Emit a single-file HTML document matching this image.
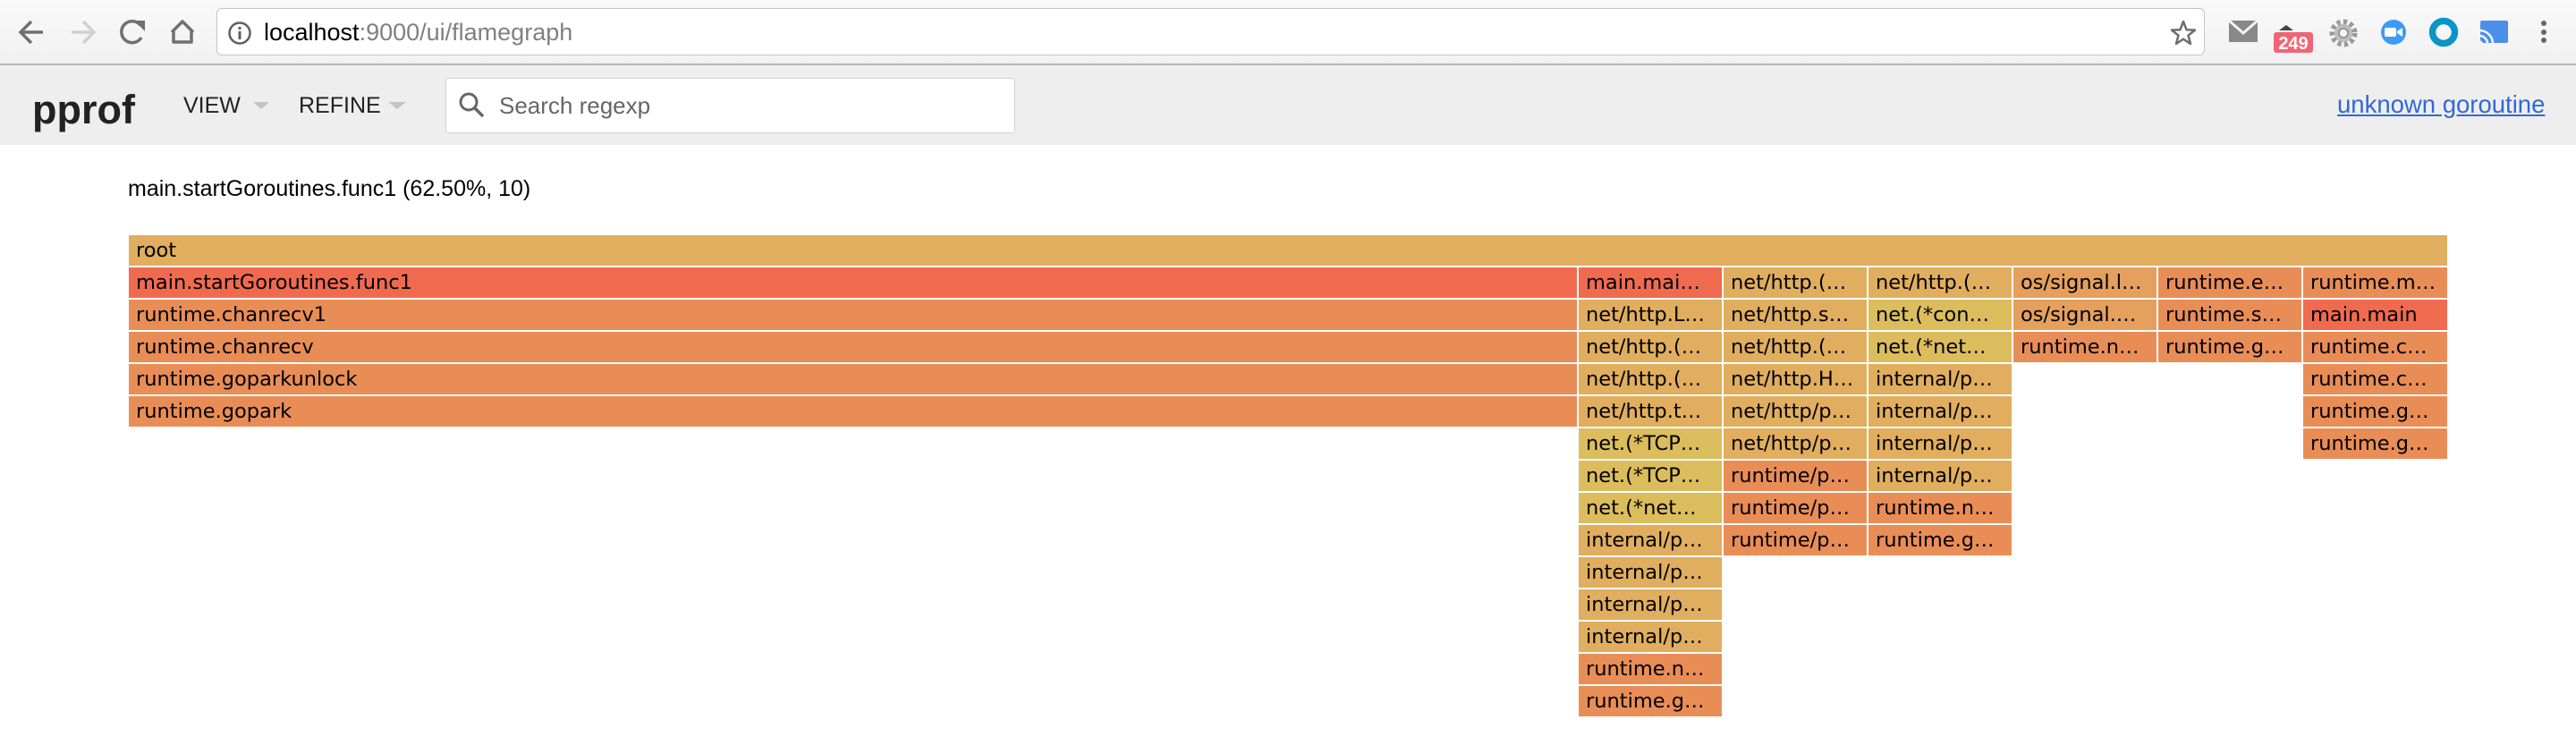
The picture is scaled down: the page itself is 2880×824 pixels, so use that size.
<!DOCTYPE html>
<html><head><meta charset="utf-8">
<style>
*{margin:0;padding:0;box-sizing:border-box}
body{width:2880px;height:824px;background:#fff;position:relative;overflow:hidden;font-family:"Liberation Sans",sans-serif}
.chrome{position:absolute;left:0;top:0;width:2880px;height:73px;background:linear-gradient(#f9f9f9,#f1f1f1);border-bottom:2px solid #b4b4b4}
.url{position:absolute;left:242px;top:9px;width:2223px;height:53px;background:#fff;border:1.5px solid #c4c4c4;border-radius:6px}
.urltext{position:absolute;left:295px;top:19px;font-size:27px;color:#000;line-height:34px}
.urltext span{color:#808080}
.hdr{position:absolute;left:0;top:73px;width:2880px;height:89px;background:#eeeeee}
.ab{position:absolute;white-space:nowrap}
.fb{position:absolute;height:34px;line-height:34px;font-family:"DejaVu Sans",sans-serif;font-size:22.5px;color:#000;padding-left:8px;overflow:hidden;white-space:nowrap}
.R{background:#f06a50}.O{background:#e98d57}.T{background:#e0ae5e}.Y{background:#dcbd5e}.S{background:#e4a05c}
</style></head><body>
<div class="chrome"></div>
<svg class="ab" style="left:0;top:0" width="2880" height="73">
 <g fill="none" stroke="#707070" stroke-width="3.5">
  <path d="M48 36H24M35 24L23 36L35 48"/>
 </g>
 <g fill="none" stroke="#d0d0d0" stroke-width="3.5"><path d="M80 36H104M93 24L105 36L93 48"/></g>
 <path d="M157 28A12 12 0 1 0 158 42" fill="none" stroke="#707070" stroke-width="3.5"/>
 <path d="M150 23L162 23L162 35Z" fill="#707070"/>
 <path d="M204 24L194 34V47H214V34Z M192 36L204 24L216 36" fill="none" stroke="#707070" stroke-width="3.5" stroke-linejoin="round"/>
</svg>
<div class="url"></div>
<svg class="ab" style="left:254px;top:23px" width="28" height="28"><circle cx="14" cy="14" r="11.5" fill="none" stroke="#5f5f5f" stroke-width="2.5"/><rect x="12.5" y="12" width="3" height="9" fill="#5f5f5f"/><rect x="12.5" y="7" width="3" height="3" fill="#5f5f5f"/></svg>
<div class="urltext">localhost<span>:9000/ui/flamegraph</span></div>
<svg class="ab" style="left:2425px;top:21px" width="32" height="32"><path d="M16 3L19.5 12.2L29 12.6L21.5 18.6L24 28L16 22.7L8 28L10.5 18.6L3 12.6L12.5 12.2Z" fill="none" stroke="#6e6e6e" stroke-width="2.5" stroke-linejoin="round"/></svg>
<svg class="ab" style="left:2480px;top:10px" width="400" height="60">
 <rect x="12" y="13" width="32" height="24" fill="#888"/><path d="M12 13L28 27L44 13" fill="none" stroke="#f4f4f4" stroke-width="3"/>
 <path d="M76 18L84 24H68Z" fill="#444"/>
 <rect x="62" y="26" width="44" height="23" rx="3" fill="#f06575"/>
 <text x="84" y="45" text-anchor="middle" font-family="Liberation Sans" font-weight="bold" font-size="20" fill="#fff">249</text>
 <circle cx="140" cy="27" r="12" fill="none" stroke="#9a9a9a" stroke-width="7" stroke-dasharray="4 3"/>
 <circle cx="140" cy="27" r="10" fill="#bdbdbd"/><circle cx="140" cy="27" r="5" fill="#f4f4f4" stroke="#888" stroke-width="1.5"/>
 <circle cx="196" cy="26" r="14" fill="#3d9bf3"/><rect x="186" y="21" width="13" height="10" rx="2" fill="#fff"/><path d="M200 25L206 21V31L200 27Z" fill="#fff"/>
 <circle cx="252" cy="26" r="12.5" fill="none" stroke="#0a94c8" stroke-width="7.5"/>
 <rect x="293" y="13" width="31" height="25" rx="2" fill="#4a90e8"/>
 <path d="M292 24A15 15 0 0 1 307 39M292 30A9 9 0 0 1 301 39" fill="none" stroke="#f4f4f4" stroke-width="2.5"/><circle cx="293" cy="38" r="2.5" fill="#f4f4f4"/>
 <circle cx="364" cy="16" r="3" fill="#666"/><circle cx="364" cy="26" r="3" fill="#666"/><circle cx="364" cy="35" r="3" fill="#666"/>
</svg>
<div class="hdr"></div>
<div class="ab" style="left:36px;top:93px;font-size:45px;font-weight:bold;color:#222;line-height:60px">pprof</div>
<div class="ab" style="left:205px;top:103px;font-size:25px;color:#222;line-height:30px">VIEW</div>
<div class="ab" style="left:334px;top:103px;font-size:25px;color:#222;line-height:30px">REFINE</div>
<svg class="ab" style="left:280px;top:112px" width="180" height="14"><path d="M3 2H21L12 10Z M154 2H174L164 10Z" fill="#c4c4c4"/></svg>
<div class="ab" style="left:498px;top:87px;width:637px;height:62px;background:#fff;border:1.5px solid #d2d2d2;border-radius:3px"></div>
<svg class="ab" style="left:510px;top:102px" width="36" height="32"><circle cx="14" cy="12" r="9" fill="none" stroke="#666" stroke-width="3"/><path d="M20.5 18.5L30 28" stroke="#666" stroke-width="3.5"/></svg>
<div class="ab" style="left:558px;top:102px;font-size:26px;color:#666;line-height:32px">Search regexp</div>
<div class="ab" style="left:2613px;top:101px;font-size:27.5px;color:#3367d6;line-height:32px;text-decoration:underline">unknown goroutine</div>
<div class="ab" style="left:143px;top:196px;font-size:25px;color:#000;line-height:30px">main.startGoroutines.func1 (62.50%, 10)</div>

<div class="fb T" style="left:144px;top:263px;width:2592px">root</div>
<div class="fb R" style="left:144px;top:299px;width:1619px">main.startGoroutines.func1</div>
<div class="fb O" style="left:144px;top:335px;width:1619px">runtime.chanrecv1</div>
<div class="fb O" style="left:144px;top:371px;width:1619px">runtime.chanrecv</div>
<div class="fb O" style="left:144px;top:407px;width:1619px">runtime.goparkunlock</div>
<div class="fb O" style="left:144px;top:443px;width:1619px">runtime.gopark</div>

<div class="fb R" style="left:1765px;top:299px;width:160px">main.mai…</div>
<div class="fb T" style="left:1765px;top:335px;width:160px">net/http.L…</div>
<div class="fb T" style="left:1765px;top:371px;width:160px">net/http.(…</div>
<div class="fb T" style="left:1765px;top:407px;width:160px">net/http.(…</div>
<div class="fb T" style="left:1765px;top:443px;width:160px">net/http.t…</div>
<div class="fb Y" style="left:1765px;top:479px;width:160px">net.(*TCP…</div>
<div class="fb Y" style="left:1765px;top:515px;width:160px">net.(*TCP…</div>
<div class="fb Y" style="left:1765px;top:551px;width:160px">net.(*net…</div>
<div class="fb T" style="left:1765px;top:587px;width:160px">internal/p…</div>
<div class="fb T" style="left:1765px;top:623px;width:160px">internal/p…</div>
<div class="fb T" style="left:1765px;top:659px;width:160px">internal/p…</div>
<div class="fb T" style="left:1765px;top:695px;width:160px">internal/p…</div>
<div class="fb O" style="left:1765px;top:731px;width:160px">runtime.n…</div>
<div class="fb O" style="left:1765px;top:767px;width:160px">runtime.g…</div>

<div class="fb T" style="left:1927px;top:299px;width:160px">net/http.(…</div>
<div class="fb T" style="left:1927px;top:335px;width:160px">net/http.s…</div>
<div class="fb T" style="left:1927px;top:371px;width:160px">net/http.(…</div>
<div class="fb T" style="left:1927px;top:407px;width:160px">net/http.H…</div>
<div class="fb T" style="left:1927px;top:443px;width:160px">net/http/p…</div>
<div class="fb T" style="left:1927px;top:479px;width:160px">net/http/p…</div>
<div class="fb O" style="left:1927px;top:515px;width:160px">runtime/p…</div>
<div class="fb O" style="left:1927px;top:551px;width:160px">runtime/p…</div>
<div class="fb O" style="left:1927px;top:587px;width:160px">runtime/p…</div>

<div class="fb T" style="left:2089px;top:299px;width:160px">net/http.(…</div>
<div class="fb Y" style="left:2089px;top:335px;width:160px">net.(*con…</div>
<div class="fb Y" style="left:2089px;top:371px;width:160px">net.(*net…</div>
<div class="fb T" style="left:2089px;top:407px;width:160px">internal/p…</div>
<div class="fb T" style="left:2089px;top:443px;width:160px">internal/p…</div>
<div class="fb T" style="left:2089px;top:479px;width:160px">internal/p…</div>
<div class="fb T" style="left:2089px;top:515px;width:160px">internal/p…</div>
<div class="fb O" style="left:2089px;top:551px;width:160px">runtime.n…</div>
<div class="fb O" style="left:2089px;top:587px;width:160px">runtime.g…</div>

<div class="fb S" style="left:2251px;top:299px;width:160px">os/signal.l…</div>
<div class="fb S" style="left:2251px;top:335px;width:160px">os/signal.…</div>
<div class="fb O" style="left:2251px;top:371px;width:160px">runtime.n…</div>

<div class="fb O" style="left:2413px;top:299px;width:160px">runtime.e…</div>
<div class="fb O" style="left:2413px;top:335px;width:160px">runtime.s…</div>
<div class="fb O" style="left:2413px;top:371px;width:160px">runtime.g…</div>

<div class="fb O" style="left:2575px;top:299px;width:161px">runtime.m…</div>
<div class="fb R" style="left:2575px;top:335px;width:161px">main.main</div>
<div class="fb O" style="left:2575px;top:371px;width:161px">runtime.c…</div>
<div class="fb O" style="left:2575px;top:407px;width:161px">runtime.c…</div>
<div class="fb O" style="left:2575px;top:443px;width:161px">runtime.g…</div>
<div class="fb O" style="left:2575px;top:479px;width:161px">runtime.g…</div>
</body></html>
